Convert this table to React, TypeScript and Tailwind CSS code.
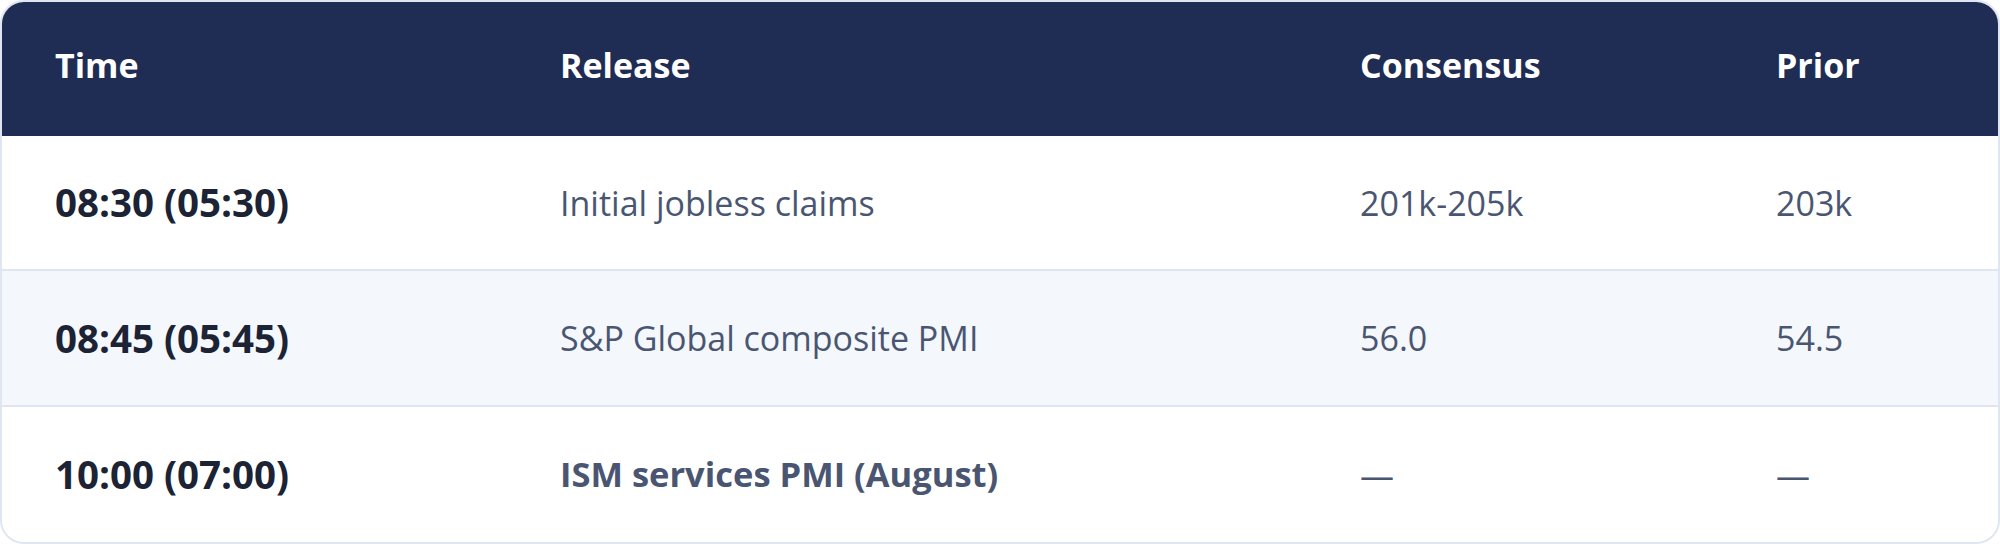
import React from "react";

type Row = {
  time: string;
  release: string;
  cons: string;
  prior: string;
  alt: boolean;
  strong: boolean;
  h: string;
  last: boolean;
};

const rows: Row[] = [
  { time: "08:30 (05:30)", release: "Initial jobless claims", cons: "201k-205k", prior: "203k", alt: false, strong: false, h: "h-[135px]", last: false },
  { time: "08:45 (05:45)", release: "S&P Global composite PMI", cons: "56.0", prior: "54.5", alt: true, strong: false, h: "h-[136px]", last: false },
  { time: "10:00 (07:00)", release: "ISM services PMI (August)", cons: "—", prior: "—", alt: false, strong: true, h: "h-[135px]", last: true },
];

export default function App() {
  return (
    <div className="w-[2000px] h-[544px] bg-white font-['Open_Sans','Noto_Sans',sans-serif]">
      <div className="h-full rounded-[24px] border-2 border-[#dfe5f1] overflow-hidden flex flex-col">
        <div className="grid grid-cols-[505px_800px_416px_1fr] h-[134px] shrink-0 bg-[#1f2d55] items-center text-white font-bold text-[34px] leading-none">
          <div className="pl-[53px] -mt-[8px]">Time</div>
          <div className="pl-[53px] -mt-[8px]">Release</div>
          <div className="pl-[53px] -mt-[8px]">Consensus</div>
          <div className="pl-[53px] -mt-[8px]">Prior</div>
        </div>
        {rows.map((r) => (
          <div
            key={r.time}
            className={`grid grid-cols-[505px_800px_416px_1fr] ${r.h} shrink-0 items-center text-[34px] leading-none ${r.alt ? "bg-[#f4f7fc]" : "bg-white"} ${r.last ? "" : "border-b-2 border-[#dfe5f1]"}`}
          >
            <div className="pl-[53px] font-bold text-[38.5px] text-[#1b2334]">{r.time}</div>
            <div className={`pl-[53px] text-[#4a5671] ${r.strong ? "font-bold text-[34.5px]" : "font-normal"}`}>{r.release}</div>
            <div className="pl-[53px] text-[#4a5671]">{r.cons}</div>
            <div className="pl-[53px] text-[#4a5671]">{r.prior}</div>
          </div>
        ))}
      </div>
    </div>
  );
}
